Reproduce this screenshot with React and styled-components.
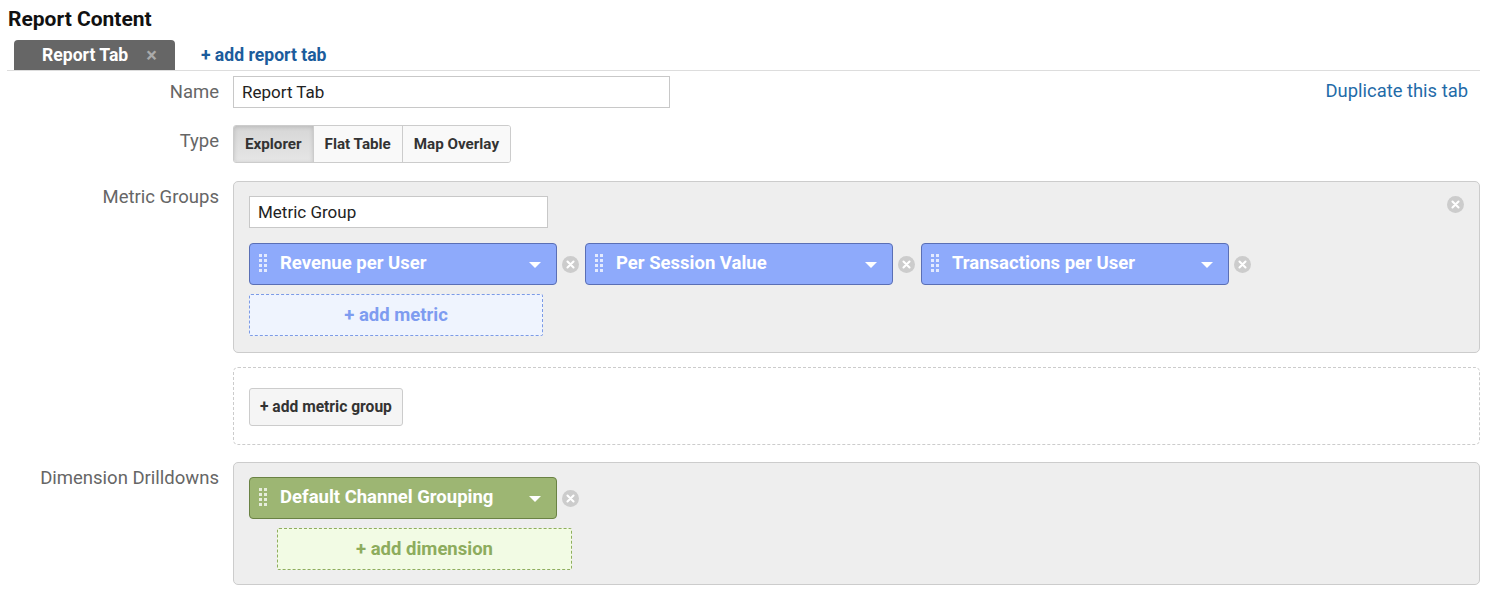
import React from 'react';
import styled, { createGlobalStyle } from 'styled-components';

const GlobalStyle = createGlobalStyle`
  body {
    margin: 0;
    background: #fff;
    font-family: Roboto, "Liberation Sans", sans-serif;
    color: #333;
  }
`;

const Page = styled.div`
  padding: 8px 20px 0 7px;
`;

const Title = styled.h2`
  margin: 0 0 10px 1px;
  font-size: 21px;
  line-height: 22px;
  font-weight: 700;
  color: #111;
`;

const TabBar = styled.div`
  display: flex;
  align-items: center;
  gap: 26px;
  height: 30px;
  padding-left: 7px;
  border-bottom: 1px solid #ddd;
`;

const Tab = styled.div`
  display: flex;
  align-items: center;
  gap: 18px;
  height: 30px;
  padding: 0 18px 0 28px;
  background: #666;
  border-radius: 4px 4px 0 0;
  color: #fff;
  font-weight: 700;
  font-size: 17.6px;
`;

const TabClose = styled.span`
  color: #aaa;
  font-size: 20px;
  line-height: 1;
`;

const AddTab = styled.a`
  color: #1c5c9c;
  font-weight: 700;
  font-size: 17.6px;
  text-decoration: none;
`;

const Form = styled.div`
  display: flex;
  flex-direction: column;
  padding-top: 5px;
`;

const Row = styled.div`
  display: grid;
  grid-template-columns: 212px 1fr;
  column-gap: 14px;
  margin-top: ${p => p.$gap || 0}px;
`;

const Label = styled.div`
  text-align: right;
  padding-top: 5px;
  font-size: 18.5px;
  line-height: 22px;
  color: #666;
`;

const Field = styled.div`
  display: flex;
  justify-content: space-between;
  align-items: flex-start;
`;

const TextInput = styled.input`
  box-sizing: border-box;
  width: ${p => p.$w}px;
  height: 32px;
  padding: 0 8px;
  border: 1px solid #c8c8c8;
  font-family: inherit;
  font-size: 17px;
  color: #222;
  background: #fff;
  outline: none;
`;

const DupLink = styled.a`
  margin: 4px 12px 0 0;
  color: #1f6ba8;
  font-size: 18.4px;
  text-decoration: none;
`;

const Segmented = styled.div`
  box-sizing: border-box;
  display: inline-flex;
  height: 38px;
  border: 1px solid #ccc;
  border-radius: 3px;
  overflow: hidden;
`;

const SegButton = styled.button`
  height: 100%;
  padding: 0 11px;
  border: none;
  border-left: ${p => (p.$first ? 'none' : '1px solid #ccc')};
  background: ${p => (p.$active ? 'linear-gradient(#d6d6d6, #e6e6e6)' : '#f9f9f9')};
  box-shadow: ${p => (p.$active ? 'inset 0 1px 4px rgba(0,0,0,0.15)' : 'none')};
  font-family: inherit;
  font-size: 15.2px;
  font-weight: 700;
  color: #333;
`;

const Panel = styled.div`
  position: relative;
  display: flex;
  flex-direction: column;
  align-items: flex-start;
  padding: ${p => p.$pad};
  background: ${p => (p.$dashed ? '#fff' : '#eee')};
  border: 1px ${p => (p.$dashed ? 'dashed' : 'solid')} #ccc;
  border-radius: 5px;
`;

const ChipRow = styled.div`
  display: flex;
  align-items: center;
  margin-top: 15px;
`;

const ChipItem = styled.div`
  display: flex;
  align-items: center;
  gap: 5px;
  margin-right: 6px;
`;

const Chip = styled.div`
  box-sizing: border-box;
  display: flex;
  align-items: center;
  width: 308px;
  height: 42px;
  padding: 0 15px 2px 8px;
  background: ${p => (p.$green ? '#9db673' : '#8eaafb')};
  border: 1px solid ${p => (p.$green ? '#6a8244' : '#5a6fb5')};
  border-radius: 4px;
  color: #fff;
  font-size: 18.5px;
  font-weight: 700;
`;

const ChipText = styled.span`
  flex: 1;
  margin-left: 12px;
  white-space: nowrap;
`;

const Caret = styled.span`
  width: 0;
  height: 0;
  border-left: 6px solid transparent;
  border-right: 6px solid transparent;
  border-top: 6px solid #fff;
  margin-top: 4px;
`;

const AddSlot = styled.div`
  margin-top: 9px;
  padding-left: ${p => p.$indent || 0}px;
`;

const AddBox = styled.div`
  box-sizing: border-box;
  display: flex;
  align-items: center;
  justify-content: center;
  width: ${p => p.$w}px;
  height: 42px;
  background: ${p => (p.$green ? '#f2fbe4' : '#eff4fe')};
  border: 1px dashed ${p => (p.$green ? '#8fae5e' : '#7c9be6')};
  border-radius: 2px;
  color: ${p => (p.$green ? '#8dac5d' : '#7e9cf0')};
  font-size: 18.5px;
  font-weight: 700;
`;

const PlainButton = styled.button`
  box-sizing: border-box;
  height: 38px;
  padding: 0 10px;
  background: #f5f5f5;
  border: 1px solid #ccc;
  border-radius: 3px;
  font-family: inherit;
  font-size: 15.6px;
  font-weight: 700;
  color: #333;
`;

const PanelClose = styled.span`
  position: absolute;
  top: 14px;
  right: 15px;
  display: flex;
`;

const Handle = () => (
  <svg width="10" height="20" viewBox="0 0 10 20">
    {[0, 1, 2, 3].map(r =>
      [0, 1].map(c => (
        <rect key={`${r}-${c}`} x={1 + c * 5} y={1 + r * 5} width="3" height="3" fill="rgba(255,255,255,0.75)" />
      ))
    )}
  </svg>
);

const RemoveIcon = ({ size = 17 }) => (
  <svg width={size} height={size} viewBox="0 0 18 18">
    <circle cx="9" cy="9" r="9" fill="#ccc" />
    <path d="M5.8 5.8 L12.2 12.2 M12.2 5.8 L5.8 12.2" stroke="#fff" strokeWidth="2.2" strokeLinecap="round" />
  </svg>
);

const MetricChip = ({ label, green }) => (
  <ChipItem>
    <Chip $green={green}>
      <Handle />
      <ChipText>{label}</ChipText>
      <Caret />
    </Chip>
    <RemoveIcon />
  </ChipItem>
);

export default function App() {
  return (
    <Page>
      <GlobalStyle />
      <Title>Report Content</Title>
      <TabBar>
        <Tab>
          Report Tab
          <TabClose>×</TabClose>
        </Tab>
        <AddTab href="#">+ add report tab</AddTab>
      </TabBar>

      <Form>
        <Row>
          <Label>Name</Label>
          <Field>
            <TextInput $w={437} defaultValue="Report Tab" />
            <DupLink href="#">Duplicate this tab</DupLink>
          </Field>
        </Row>

        <Row $gap={17}>
          <Label>Type</Label>
          <Field>
            <Segmented>
              <SegButton $first $active>Explorer</SegButton>
              <SegButton>Flat Table</SegButton>
              <SegButton>Map Overlay</SegButton>
            </Segmented>
          </Field>
        </Row>

        <Row $gap={18}>
          <Label>Metric Groups</Label>
          <Panel $pad="14px 15px 16px">
            <TextInput $w={299} defaultValue="Metric Group" />
            <ChipRow>
              <MetricChip label="Revenue per User" />
              <MetricChip label="Per Session Value" />
              <MetricChip label="Transactions per User" />
            </ChipRow>
            <AddSlot>
              <AddBox $w={294}>+ add metric</AddBox>
            </AddSlot>
            <PanelClose>
              <RemoveIcon />
            </PanelClose>
          </Panel>
        </Row>

        <Row $gap={14}>
          <div />
          <Panel $dashed $pad="20px 15px 18px">
            <PlainButton>+ add metric group</PlainButton>
          </Panel>
        </Row>

        <Row $gap={17}>
          <Label>Dimension Drilldowns</Label>
          <Panel $pad="14px 15px 14px">
            <MetricChip label="Default Channel Grouping" green />
            <AddSlot $indent={28}>
              <AddBox $green $w={295}>+ add dimension</AddBox>
            </AddSlot>
          </Panel>
        </Row>
      </Form>
    </Page>
  );
}
